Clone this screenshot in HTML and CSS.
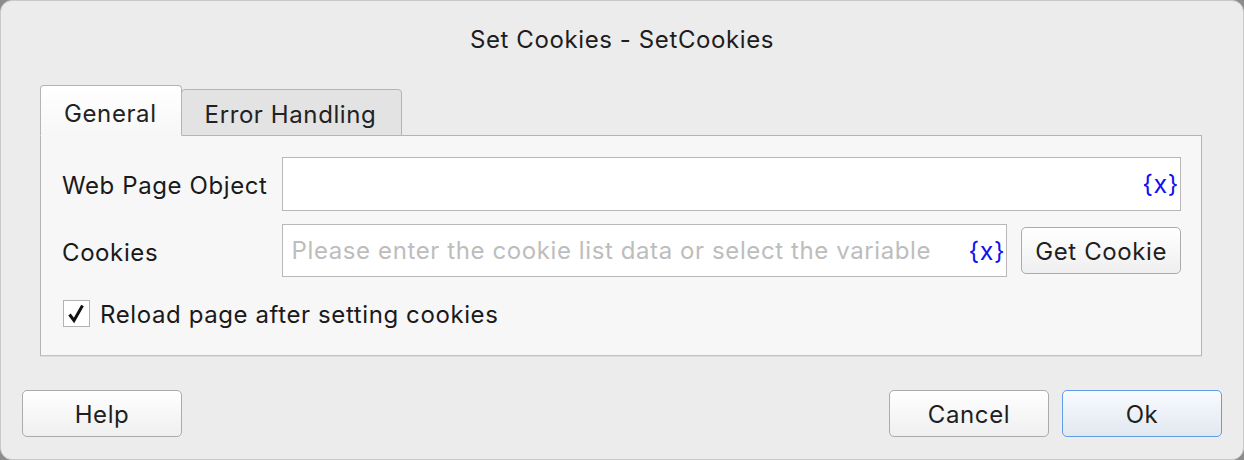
FILE: index.html
```html
<!DOCTYPE html>
<html>
<head>
<meta charset="utf-8">
<link rel="stylesheet" href="styles.css">
</head>
<body>
<div class="window">
  <div class="title">Set Cookies - SetCookies</div>
  <div class="tabs">
    <div class="tab active">General</div>
    <div class="tab">Error Handling</div>
  </div>
  <div class="panel">
    <div class="row">
      <div class="label">Web Page Object</div>
      <div class="field field-wide"><span class="var">{x}</span></div>
    </div>
    <div class="row row-cookies">
      <div class="label">Cookies</div>
      <div class="field field-cookies"><span class="placeholder">Please enter the cookie list data or select the variable</span><span class="var">{x}</span></div>
      <div class="btn btn-get">Get Cookie</div>
    </div>
    <div class="check-row">
      <span class="checkbox"><svg width="25" height="25" viewBox="0 0 25 25"><path d="M5.5 13.5 L10 19.5 L18.5 4.5" fill="none" stroke="#111" stroke-width="3" stroke-linecap="butt" stroke-linejoin="miter"/></svg></span>
      <span class="check-label">Reload page after setting cookies</span>
    </div>
  </div>
  <div class="footer">
    <div class="btn btn-foot">Help</div>
    <div class="spacer"></div>
    <div class="btn btn-foot">Cancel</div>
    <div class="btn btn-foot btn-ok">Ok</div>
  </div>
</div>
</body>
</html>
```

FILE: styles.css
```css
html, body {
  margin: 0;
  padding: 0;
  background: #8c8c8c;
}
body {
  width: 1244px;
  height: 460px;
  overflow: hidden;
  font-family: "Inter", "Liberation Sans", sans-serif;
  color: #1f1f1f;
  letter-spacing: 0.6px;
}
.window {
  box-sizing: border-box;
  width: 1244px;
  height: 460px;
  background: #ececec;
  border: 1px solid #c9c9c9;
  border-radius: 12px;
  display: flex;
  flex-direction: column;
  padding: 0 21px 0 21px;
}
.title {
  font-size: 24px;
  text-align: center;
  height: 28px;
  line-height: 28px;
  margin-top: 25px;
  color: #1d1d1d;
}
.tabs {
  display: flex;
  align-items: flex-end;
  margin-top: 31px;
  margin-left: 18px;
  height: 51px;
  position: relative;
  z-index: 1;
  margin-bottom: -1px;
}
.tab {
  box-sizing: border-box;
  font-size: 24px;
  border: 1px solid #b4b4b4;
  border-radius: 4px 4px 0 0;
  background: #e3e3e3;
  height: 47px;
  padding: 0 25px 0 23px;
  line-height: 50px;
  color: #222;
}
.tab.active {
  height: 51px;
  background: linear-gradient(#ffffff, #f7f7f7);
  border-bottom-color: #f7f7f7;
  line-height: 56px;
  padding: 0 24px 0 23px;
  margin-right: -1px;
  position: relative;
  z-index: 2;
}
.panel {
  box-sizing: border-box;
  margin-left: 18px;
  width: 1162px;
  height: 221px;
  background: #f7f7f7;
  border: 1px solid #b4b4b4;
  border-bottom-color: #c2c2c2;
  box-shadow: 0 1px 0 #dcdcdc;
  padding: 21px 20px 0 21px;
  display: flex;
  flex-direction: column;
}
.row {
  display: flex;
  align-items: center;
}
.label {
  width: 220px;
  font-size: 24px;
  color: #1a1a1a;
  padding-top: 3px;
}
.field {
  box-sizing: border-box;
  background: #ffffff;
  border: 1px solid #b8b8b8;
  display: flex;
  align-items: center;
  justify-content: flex-end;
  padding: 0 1px 0 9px;
}
.field-wide {
  flex: 1;
  height: 54px;
}
.row-cookies {
  margin-top: 13px;
}
.field-cookies {
  width: 727px;
  height: 53px;
  justify-content: space-between;
}
.placeholder {
  font-size: 24px;
  color: #bdbdbd;
}
.var {
  font-size: 25px;
  letter-spacing: 0.6px;
  color: #1010f0;
}
.btn {
  box-sizing: border-box;
  border: 1px solid #ababab;
  border-radius: 5px;
  background: linear-gradient(#ffffff, #efefef);
  font-size: 24px;
  color: #1f1f1f;
  display: flex;
  align-items: center;
  justify-content: center;
  height: 47px;
  padding-top: 2px;
}
.btn-get {
  width: 160px;
  margin-left: 14px;
}
.check-row {
  display: flex;
  align-items: center;
  margin-top: 21px;
  margin-left: 1px;
}
.checkbox {
  box-sizing: border-box;
  width: 27px;
  height: 27px;
  border: 1px solid #b3b3b3;
  background: #ffffff;
  display: flex;
  align-items: center;
  justify-content: center;
}
.checkbox svg {
  display: block;
}
.check-label {
  margin-left: 10px;
  font-size: 24px;
  color: #1a1a1a;
  padding-top: 2px;
}
.footer {
  display: flex;
  align-items: center;
  margin-top: 34px;
}
.btn-foot {
  width: 160px;
}
.spacer {
  flex: 1;
}
.btn-ok {
  margin-left: 13px;
  border-color: #5f9ee6;
  background: linear-gradient(#f8fbff, #e2e8f0);
}
```
